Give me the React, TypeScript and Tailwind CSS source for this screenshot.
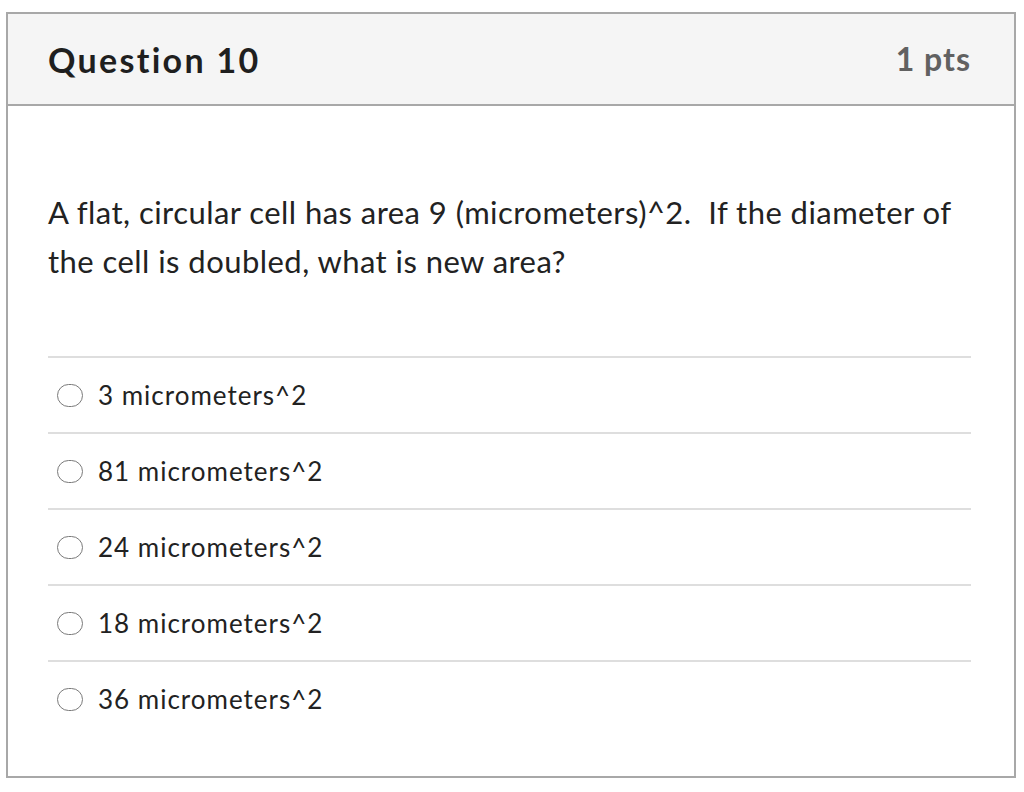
const answers = [
  '3 micrometers^2',
  '81 micrometers^2',
  '24 micrometers^2',
  '18 micrometers^2',
  '36 micrometers^2',
];

function Radio() {
  return (
    <span className="h-[23px] w-[26px] shrink-0 rounded-full border-[1.5px] border-[#7a7a7a] bg-white" />
  );
}

export default function App() {
  return (
    <div className="min-h-[792px] bg-white pt-[12px] pl-[6px] font-['Lato',sans-serif]">
      <div className="w-[1010px] border-2 border-[#a8a8a8]">
        <div className="flex h-[92px] items-center justify-between border-b-2 border-[#a8a8a8] bg-[#f5f5f5] px-10">
          <h2 className="text-[34px] font-bold tracking-[2.3px] text-[#1f1f1f]">Question 10</h2>
          <span className="pr-[3px] text-[32px] font-bold tracking-[1px] text-[#616161]">1 pts</span>
        </div>

        <div className="px-10 pt-[82px] pb-[40px]">
          <p className="text-[31px] leading-[49px] tracking-[0.45px] text-[#222]">
            A flat, circular cell has area 9 (micrometers)^2.&nbsp; If the diameter of the cell is
            doubled, what is new area?
          </p>

          <ul className="mt-[70px] mr-[3px]">
            {answers.map(a => (
              <li
                key={a}
                className="flex h-[76px] items-center gap-[15px] border-t-2 border-[#dedede] pl-[9px]"
              >
                <Radio />
                <span className="text-[26px] tracking-[1px] text-[#222]">{a}</span>
              </li>
            ))}
          </ul>
        </div>
      </div>
    </div>
  );
}
